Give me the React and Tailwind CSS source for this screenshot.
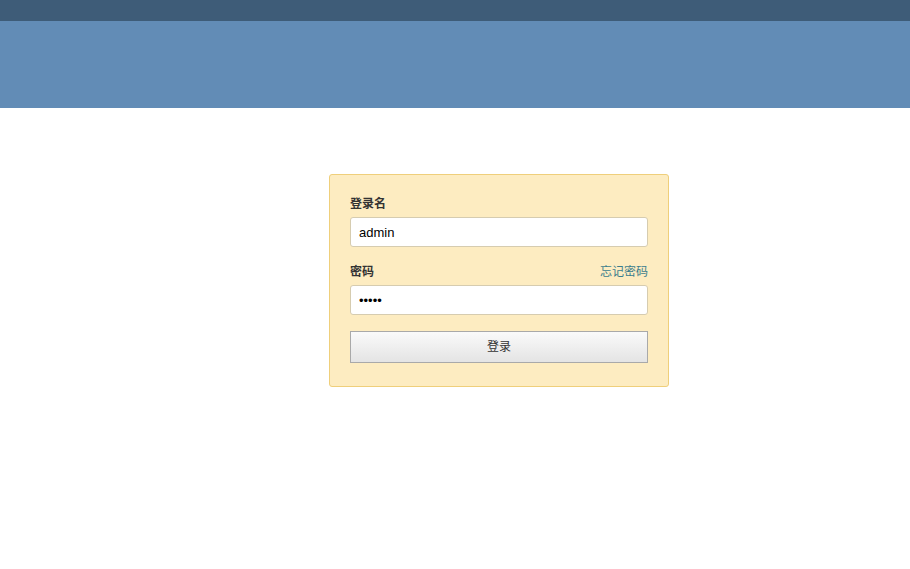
import React, { useState } from 'react';

const App = () => {
  const [username, setUsername] = useState('admin');
  const [password, setPassword] = useState('admin');

  return (
    <div className="min-h-screen bg-white font-['Liberation_Sans','Noto_Sans_CJK_SC',sans-serif] text-[#333]">
      <div className="h-[21px] bg-[#3e5c78]" />
      <div className="h-[87px] bg-[#628cb6]" />

      <div className="pt-[66px] pl-[329px]">
        <form
          className="w-[340px] rounded-[3px] border border-[#efcf7b] bg-[#fdecc1] px-5 pt-5 pb-[23px]"
          onSubmit={(e) => e.preventDefault()}
        >
          <label className="block text-[12px] font-bold leading-[18px] text-[#333]">登录名</label>
          <input
            type="text"
            value={username}
            onChange={(e) => setUsername(e.target.value)}
            className="mt-1 block h-[30px] w-full rounded-[3px] border border-[#d6ccb0] bg-white px-2 text-[13px] text-black outline-none"
          />

          <div className="mt-4 flex items-center justify-between leading-[18px]">
            <label className="text-[12px] font-bold text-[#333]">密码</label>
            <a href="#" className="text-[12px] text-[#3b7d8c]">忘记密码</a>
          </div>
          <input
            type="password"
            value={password}
            onChange={(e) => setPassword(e.target.value)}
            className="mt-1 block h-[30px] w-full rounded-[3px] border border-[#d6ccb0] bg-white px-2 text-[13px] text-black outline-none"
          />

          <button
            type="submit"
            className="mt-4 block h-[32px] w-full border border-[#a9a9a9] bg-gradient-to-b from-[#fafafa] to-[#e4e4e4] text-[12px] leading-[30px] text-[#333]"
          >
            登录
          </button>
        </form>
      </div>
    </div>
  );
};

export default App;
